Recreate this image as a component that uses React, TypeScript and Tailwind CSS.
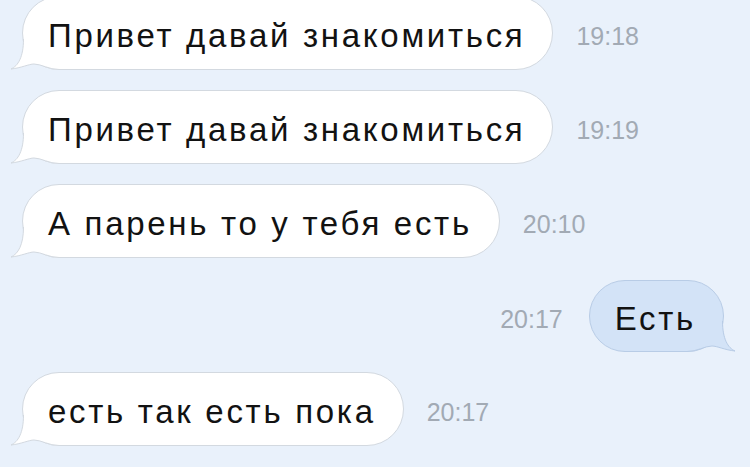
import React from 'react';

type Msg = {
  text: string;
  time: string;
  out?: boolean;
};

const messages: Msg[] = [
  { text: 'Привет давай знакомиться', time: '19:18' },
  { text: 'Привет давай знакомиться', time: '19:19' },
  { text: 'А парень то у тебя есть', time: '20:10' },
  { text: 'Есть', time: '20:17', out: true },
  { text: 'есть так есть пока', time: '20:17' },
];

// tail sits in the bubble's bottom corner, drawn over the border
const Tail: React.FC<{ out?: boolean }> = ({ out }) => (
  <svg
    width="52"
    height="35"
    viewBox="0 0 52 35"
    className={
      out
        ? 'absolute right-[-14px] bottom-[-1px] -scale-x-100 overflow-visible'
        : 'absolute left-[-14px] bottom-[-1px] overflow-visible'
    }
  >
    <path
      d="M14.5,4 C14.5,22 9,31 2,34 C12,33 20,29 25,29 C32,29 40,34.5 50,34.5 L50,4 Z"
      fill={out ? '#d3e3f7' : '#ffffff'}
    />
    <path
      d="M14.5,4 C14.5,22 9,31 2,34 C12,33 20,29 25,29 C32,29 40,34.5 50,34.5"
      fill="none"
      stroke={out ? '#b8cce6' : '#d3d9e0'}
      strokeWidth="1"
    />
  </svg>
);

const Bubble: React.FC<{ msg: Msg }> = ({ msg }) => (
  <div
    className={
      msg.out
        ? 'relative flex h-[72px] items-center rounded-[36px] border border-[#b8cce6] bg-[#d3e3f7] pl-[25px] pr-[27px]'
        : 'relative flex h-[74px] items-center rounded-[37px] border border-[#d3d9e0] bg-white pl-[25px] pr-[27px]'
    }
  >
    <Tail out={msg.out} />
    <span className="relative z-10 pt-[4px] text-[33px] leading-none tracking-[2.7px] text-[#121212]">
      {msg.text}
    </span>
  </div>
);

const Time: React.FC<{ value: string }> = ({ value }) => (
  <span className="pt-[6px] text-[25px] leading-none text-[#a2aab4]">{value}</span>
);

export default function App() {
  return (
    <div
      className="h-[467px] w-[750px] overflow-hidden bg-[#e9f1fb]"
      style={{ fontFamily: '"Liberation Sans", Arial, sans-serif' }}
    >
      <div className="mt-[-4px] flex flex-col gap-[20px]">
        {messages.map((m, i) =>
          m.out ? (
            <div key={i} className="mt-[2px] flex items-center justify-end gap-[26px] pr-[26px]">
              <Time value={m.time} />
              <Bubble msg={m} />
            </div>
          ) : (
            <div key={i} className="flex items-center gap-[23px] pl-[22px]">
              <Bubble msg={m} />
              <Time value={m.time} />
            </div>
          )
        )}
      </div>
    </div>
  );
}
